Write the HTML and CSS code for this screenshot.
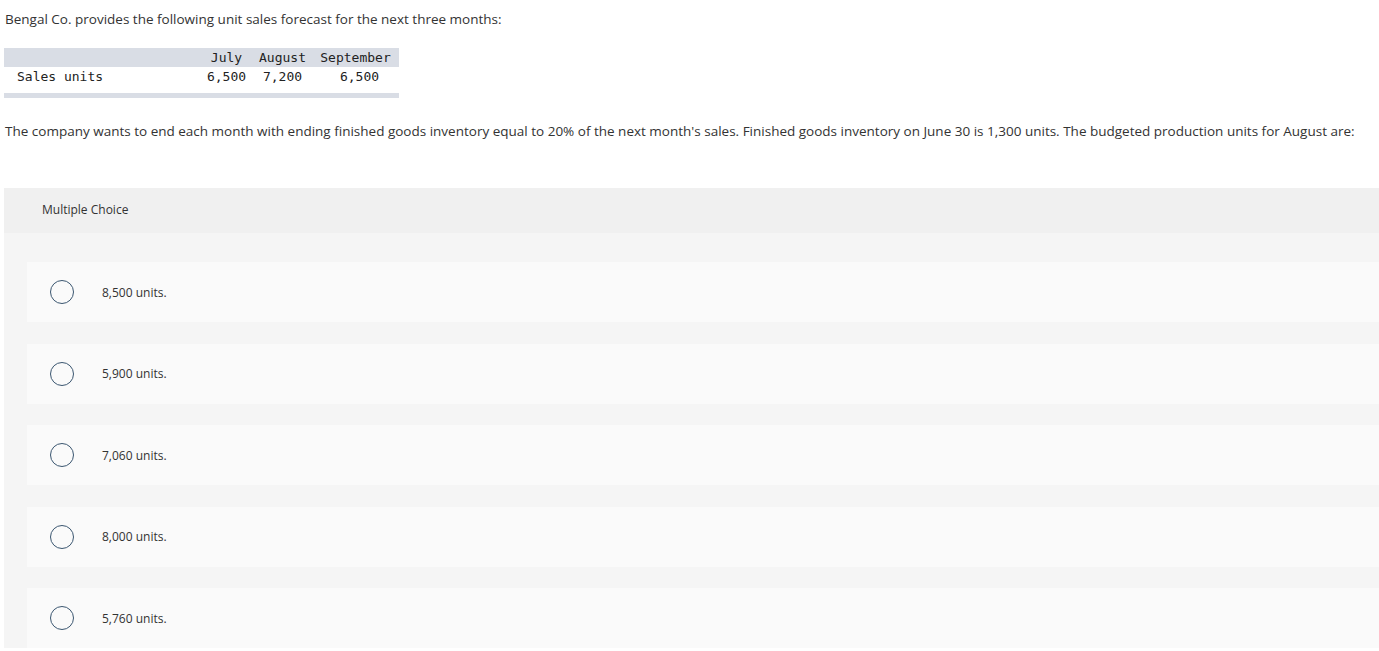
FILE: index.html
```html
<!DOCTYPE html>
<html>
<head>
<meta charset="utf-8">
<link rel="stylesheet" href="styles.css">
</head>
<body>
<div class="page">
  <p class="intro">Bengal Co. provides the following unit sales forecast for the next three months:</p>
  <div class="table">
    <div class="row head">
      <div class="cell label"></div>
      <div class="cell">July</div>
      <div class="cell">August</div>
      <div class="cell">September</div>
    </div>
    <div class="row body-row">
      <div class="cell label">Sales units</div>
      <div class="cell">6,500</div>
      <div class="cell">7,200</div>
      <div class="cell last">6,500</div>
    </div>
    <div class="foot"></div>
  </div>
  <p class="question">The company wants to end each month with ending finished goods inventory equal to 20% of the next month's sales. Finished goods inventory on June 30 is 1,300 units. The budgeted production units for August are:</p>
  <div class="mc">
    <div class="mc-head">Multiple Choice</div>
    <div class="mc-body">
      <div class="option"><span class="radio"></span><span class="opt-text">8,500 units.</span></div>
      <div class="option"><span class="radio"></span><span class="opt-text">5,900 units.</span></div>
      <div class="option"><span class="radio"></span><span class="opt-text">7,060 units.</span></div>
      <div class="option"><span class="radio"></span><span class="opt-text">8,000 units.</span></div>
      <div class="option"><span class="radio"></span><span class="opt-text">5,760 units.</span></div>
    </div>
  </div>
</div>
</body>
</html>
```
FILE: styles.css
```css
html, body {
  margin: 0;
  padding: 0;
  background: #fff;
  overflow: hidden;
}
body {
  font-family: "Open Sans", Lato, sans-serif;
  color: #333;
}
.page {
  padding: 0 0 0 4px;
}
.intro {
  margin: 0;
  padding: 11px 0 0 1px;
  font-size: 13.5px;
  line-height: 16px;
}
.table {
  margin-top: 21px;
  width: 395px;
  font-family: "DejaVu Sans Mono", monospace;
  font-size: 13px;
  color: #222;
}
.row {
  display: grid;
  grid-template-columns: 201px 43px 69px 77px;
  height: 19px;
  line-height: 19px;
}
.head {
  background: #d9dde5;
}
.cell {
  text-align: center;
  white-space: nowrap;
}
.cell.label {
  text-align: left;
  padding-left: 13px;
}
.cell.last {
  padding-left: 8px;
}
.foot {
  margin-top: 7px;
  height: 5px;
  background: #d9dde5;
}
.question {
  margin: 0;
  padding: 25px 0 0 1px;
  font-size: 13.5px;
  line-height: 16px;
  white-space: nowrap;
}
.mc {
  margin-top: 49px;
  background: #f5f5f5;
  font-size: 12px;
  color: #333;
}
.mc-head {
  background: #f0f0f0;
  height: 45px;
  line-height: 44px;
  padding-left: 38px;
}
.mc-body {
  padding: 29px 0 0 23px;
  display: flex;
  flex-direction: column;
  gap: 21.5px;
}
.option {
  background: #fafafa;
  height: 60px;
  display: flex;
  align-items: center;
}
.radio {
  width: 22px;
  height: 22px;
  border: 1.5px solid #3a5670;
  border-radius: 50%;
  margin-left: 23px;
  flex: none;
}
.opt-text {
  margin-left: 28px;
}
```
